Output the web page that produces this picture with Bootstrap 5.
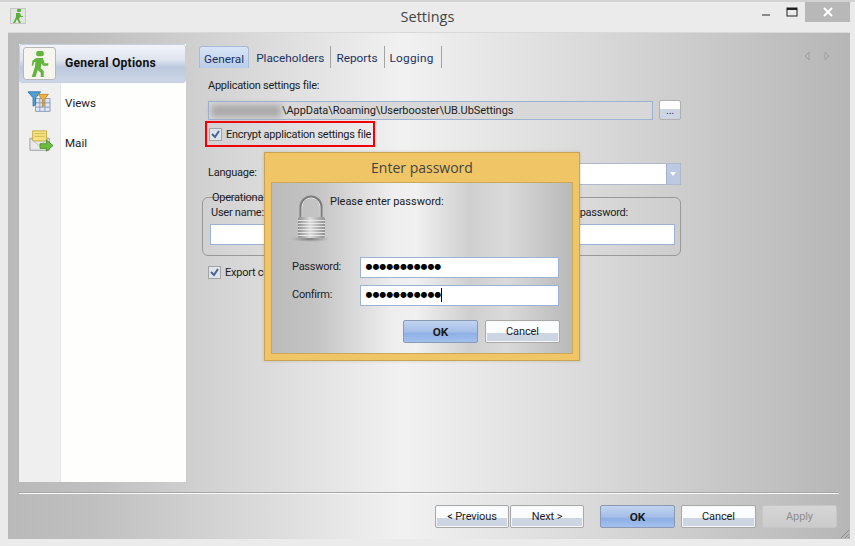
<!DOCTYPE html>
<html lang="en">
<head>
<meta charset="utf-8">
<title>Settings</title>
<link href="https://cdn.jsdelivr.net/npm/bootstrap@5.3.0/dist/css/bootstrap.min.css" rel="stylesheet">
<style>
html,body{margin:0;height:546px;overflow:hidden;background:#ebebeb}
body{font-family:Roboto,"Liberation Sans",sans-serif;font-size:11px;letter-spacing:-.25px;color:#1c1c1c;line-height:14px}
.win{width:855px;height:546px;border-top:2px solid #d2d2d2;position:relative}
.tbar{height:30px;padding-left:10px}
.ticon{width:16px;height:16px;margin-top:6px;background:#e2e6e0;border:1px solid #c6c6c6}
.ttl{font-family:"Open Sans",sans-serif;letter-spacing:0;font-size:14.5px;color:#444;position:absolute;left:0;right:0;top:8px;text-align:center}
.wbtns{position:absolute;right:5px;top:0;height:20px}
.wb{width:26px;height:20px}
.wx{width:45px;background:#b8b8b8;color:#fff}
.panel{margin-left:8px;width:842px;height:507px;border-top:1px solid #d9d9d9;background:linear-gradient(90deg,#b9b9b9 0,#bfbfbf 10%,#f1f1f1 47%,#d6d6d6 72%,#b6b6b6 100%);padding:11px 11px 0;position:relative}
.side{width:167px;height:438px;background:linear-gradient(90deg,#efefef 41px,#e6e6e6 41px,#e6e6e6 42px,#fefefd 42px)}
.sitem{height:40px;padding-left:46px;color:#222;position:relative;font-size:11.6px;letter-spacing:0}
.sitem.on{height:39px;padding-left:45px;padding-bottom:2px;font-weight:700;font-size:12.2px;letter-spacing:.2px;color:#111;border:1px solid #c6cfe0;border-radius:3px;background:linear-gradient(#f2f4f9 0,#dfe4ef 40%,#bcc8de 60%,#cdd6e7 100%)}
.sic{position:absolute}
.on .sic{left:3px;top:2px;width:33px;height:33px;background:#f6f6ee;border:1px solid #b8b8b8;border-radius:3px}
.sv{left:8px;top:8px}
.sm{left:9px;top:6px}
.main{width:638px;padding:2px 0 0 13px}
.tabs{height:22px;color:#1d3263;position:relative;font-size:11.8px;letter-spacing:0;white-space:nowrap}
.tabs .tb{padding:5px 6px 0 5px;border-right:1px solid #a4a4a4;height:22px}
.tabs .tb.on{padding:5px 4px 0 4px;border:1px solid #a9bbd8;border-bottom:0;border-radius:3px 3px 0 0;background:linear-gradient(#d8e5f6,#b9cdea);margin-right:1px}
.tabs .tb.t2{padding-left:6px}
.tabs .tb.t4{letter-spacing:.25px;padding-right:7px}
.arrs{position:absolute;right:-6px;top:5px;gap:14px}
.f{padding-left:9px}
.lb1{margin-top:11px;height:14px}
.path{height:19px;width:445px;background:#d8d8d8;border:1px solid #9db1d3;padding-left:2px;line-height:17px;white-space:nowrap;letter-spacing:-.07px}
.blur{display:inline-block;width:70px;height:12px;background:#a8a8a8;filter:blur(3px);vertical-align:middle;margin-right:1px}
.dots{width:22px;height:20px;margin-left:6px;border:1px solid #b0b0b0;border-radius:2px;background:linear-gradient(#fdfdfd 45%,#cdd4e2 45%);color:#3a2a7a;text-align:center;line-height:20px;font-size:11px}
.pathrow{margin-top:7px}
.enc{margin:1px 0 0 -3px;width:170px;height:26px;border:2px solid #f00000;padding-left:2px;gap:4px;white-space:nowrap}
.cb{width:13px;height:13px;flex:none;border:1px solid #a4a4a4;background:#dfe3ea}
.cbt{padding-top:2px}
.lang{margin-top:16px;height:22px;padding-bottom:3px}
.selbox{position:absolute;left:255px;width:218px;top:0;height:22px;border:1px solid #b0b8ca;background:#fff}
.drop{position:absolute;right:0;top:0;width:14px;height:20px;background:#bcc9e1;border-left:1px solid #9fb0cf}
.drop::after{content:"";position:absolute;left:3px;top:8px;border:3.5px solid transparent;border-top:4px solid #fff;border-bottom:0}
.fs{margin:12px 0 0 -6px;position:relative;width:479px;height:59px;border:1px solid #999;border-radius:6px}
.leg{position:absolute;left:8px;top:-7px;padding:0 1px;white-space:nowrap}
.colz{position:absolute;top:8px;left:8px;width:230px;white-space:nowrap}
.colz.cr{left:242px}
.lr{text-align:right;padding-right:47px}
.inp{height:21px;border:1px solid #9db1d3;background:#fff;margin-top:4px;margin-left:-1px}
.exp{margin-top:8px;gap:4px;height:16px}
.sep{margin-top:10px;width:820px;height:2px;border-top:1px solid #a4a4a4;border-bottom:1px solid #fbfbfb}
.foot{margin-top:11px;width:819px;padding-right:1px;gap:6px}
.wbn{height:23px;width:75px;border:1px solid #a9a9a9;border-radius:2px;background:linear-gradient(#fbfcfe 56%,#cdd4e2 56%);color:#1c1c1c;text-align:center;line-height:22px;font-size:11px;letter-spacing:-.1px;padding:0;box-shadow:inset 0 0 0 1px #f7f7f7}
.navb{width:74px}
.navg{gap:1px;margin-right:10px}
.wbn.pri{font-weight:700;font-size:11.8px;letter-spacing:0;background:linear-gradient(#c2d3ef 0,#a5bfe8 50%,#8fb0e6 60%,#a3c0ee 100%);border-color:#8a99b4;box-shadow:none}
.wbn.off{background:linear-gradient(#d6d6d6,#cbcbcb);color:#8e8e8e;border-color:#c6c6c6;box-shadow:none}
.grip{position:absolute;right:0;bottom:0}
.dlg{position:absolute;left:264px;top:150px;width:316px;height:209px;background:#f0c566;border:1px solid #c9a352;box-shadow:0 0 3px rgba(120,100,60,.25)}
.dttl{font-family:"Open Sans",sans-serif;letter-spacing:0;height:29px;text-align:center;font-size:14px;line-height:29px;color:#444}
.dbody{position:relative;margin:0 6px;height:172px;border:1px solid #c9a85c;background:linear-gradient(90deg,#bbb 0,#c4c4c4 15%,#eee 40%,#f0f0f0 48%,#cfcfcf 66%,#dadada 78%,#b9b9b9 100%);padding:12px 0 0 58px}
.pl{letter-spacing:-.02px}
.lock{position:absolute;left:18px;top:12px}
.dlab{position:absolute;left:20px}
.pw{position:absolute;left:88px;width:199px;height:21px;border:1px solid #9db1d3;background:#fff;font-family:"DejaVu Sans",sans-serif;letter-spacing:0;font-size:7.9px;line-height:18px;padding-left:4.500px;color:#000;white-space:nowrap}
.caret{display:inline-block;width:1px;height:14px;background:#000;vertical-align:middle}
.dbtns{position:absolute;left:131px;top:137px;gap:7px}
</style>
</head>
<body>
<div class="win">
  <div class="tbar d-flex">
    <div class="ticon d-flex align-items-center justify-content-center"><svg width="12" height="14" viewBox="0 0 12 14"><g fill="#5cae3a"><rect x="5" y="0" width="4" height="3" rx="1"/><path d="M4 4h4l1 3h2v1H8L7 10l2 4H7L5 10l-2 4H1l3-6z"/></g></svg></div>
    <div class="ttl">Settings</div>
    <div class="wbtns d-flex">
      <div class="wb d-flex align-items-center justify-content-center"><svg width="10" height="10"><rect x="1" y="7" width="8" height="2" fill="#8a8a8a"/></svg></div>
      <div class="wb d-flex align-items-center justify-content-center"><svg width="12" height="10"><rect x="1" y="1" width="10" height="8" fill="none" stroke="#222"/><rect x="1" y="1" width="10" height="2" fill="#222"/></svg></div>
      <div class="wx d-flex align-items-center justify-content-center"><svg width="10" height="10"><path d="M1 1l8 8M9 1l-8 8" stroke="#fff" stroke-width="2"/></svg></div>
    </div>
  </div>
  <div class="panel">
    <div class="d-flex">
      <div class="side flex-none">
        <div class="sitem on d-flex align-items-center">
          <div class="sic d-flex align-items-center justify-content-center"><svg width="18" height="26" viewBox="0 0 24 30" preserveAspectRatio="none"><g fill="#63b33f"><rect x="7" y="0" width="10" height="6" rx="2"/><path d="M7 8h9l2 6h5v3h-7l-2-3-1 6 4 3v7h-4v-5l-4-3-3 8H1l4-11 1-6H4l-1 4H1l1-6z"/></g></svg></div>
          <span>General Options</span>
        </div>
        <div class="sitem d-flex align-items-center">
          <div class="sic sv"><svg width="24" height="22" viewBox="0 0 28 26"><rect x="10" y="9" width="17" height="15" fill="#dfe6f2" stroke="#7f93b5"/><path d="M10 14h17M10 19h17M15 9v15M21 9v15" stroke="#7f93b5"/><path d="M1 1h15l-6 7v8l-3 2V8z" fill="#4f9fd8" stroke="#2d6fa5"/><path d="M13 4h12l-5 6v7l-2 2v-9z" fill="#efb23c" stroke="#b9812a"/></svg></div>
          <span>Views</span>
        </div>
        <div class="sitem d-flex align-items-center">
          <div class="sic sm"><svg width="26" height="24" viewBox="0 0 28 26"><path d="M2 10h21v13H2z" fill="#eaeaea" stroke="#9a9a9a"/><path d="M5 2h15v11H5z" fill="#f7e27f" stroke="#c4a93f"/><path d="M7 5h11M7 8h11" stroke="#d3b94e"/><path d="M2 10l10 8 11-8" fill="none" stroke="#bdbdbd"/><path d="M13 16h7v-4l7 6-7 6v-3h-7z" fill="#6cbd3f" stroke="#4b942a"/></svg></div>
          <span>Mail</span>
        </div>
      </div>
      <div class="main">
        <div class="tabs d-flex">
          <div class="tb on">General</div><div class="tb t2">Placeholders</div><div class="tb">Reports</div><div class="tb t4">Logging</div>
          <div class="arrs d-flex"><svg width="6" height="10"><path d="M5 1L1 5l4 4z" fill="none" stroke="#a0a0a0"/></svg><svg width="6" height="10"><path d="M1 1l4 4-4 4z" fill="none" stroke="#a0a0a0"/></svg></div>
        </div>
        <div class="f">
          <div class="lb1">Application settings file:</div>
          <div class="d-flex align-items-center pathrow">
            <div class="path"><span class="blur"></span>\AppData\Roaming\Userbooster\UB.UbSettings</div>
            <div class="dots">...</div>
          </div>
          <div class="enc d-flex align-items-center"><span class="cb d-flex align-items-center justify-content-center"><svg width="9" height="9"><path d="M1 4l3 3 4-6" fill="none" stroke="#4a6296" stroke-width="2"/></svg></span><span class="cbt">Encrypt application settings file</span></div>
          <div class="lang position-relative d-flex align-items-center">Language:<div class="selbox"><div class="drop"></div></div></div>
          <div class="fs">
            <div class="leg">Operational user</div>
            <div class="colz">User name:<div class="inp"></div></div>
            <div class="colz cr"><div class="lr">User password:</div><div class="inp"></div></div>
          </div>
          <div class="exp d-flex align-items-center"><span class="cb d-flex align-items-center justify-content-center"><svg width="9" height="9"><path d="M1 4l3 3 4-6" fill="none" stroke="#4a6296" stroke-width="2"/></svg></span><span class="cbt">Export config</span></div>
        </div>
      </div>
    </div>
    <div class="sep"></div>
    <div class="foot d-flex justify-content-end">
      <div class="d-flex navg"><button class="wbn navb">&lt; Previous</button><button class="wbn navb">Next &gt;</button></div>
      <button class="wbn pri">OK</button><button class="wbn">Cancel</button><button class="wbn off">Apply</button>
    </div>
    <svg class="grip" width="12" height="12"><path d="M11 3L3 11M11 7l-4 4M11 10l-1 1" stroke="#8f8f8f"/></svg>
  </div>
  <div class="dlg">
    <div class="dttl">Enter password</div>
    <div class="dbody">
      <svg class="lock" width="40" height="48" viewBox="0 0 40 48">
        <defs>
          <linearGradient id="lb" x1="0" x2="1" y1="0" y2="0"><stop offset="0" stop-color="#8d8d8d"/><stop offset=".45" stop-color="#dcdcdc"/><stop offset="1" stop-color="#8f8f8f"/></linearGradient>
          <radialGradient id="ls"><stop offset="0" stop-color="#555" stop-opacity=".7"/><stop offset="1" stop-color="#777" stop-opacity="0"/></radialGradient>
        </defs>
        <ellipse cx="20" cy="44" rx="20" ry="3" fill="url(#ls)"/>
        <path d="M11 23V12a10 10 0 0 1 20 0v11" fill="none" stroke="#7d7d7d" stroke-width="3"/>
        <path d="M12 23V12a9 9 0 0 1 18 0v11" fill="none" stroke="#eee" stroke-width="1"/>
        <rect x="8" y="22" width="27" height="21" rx="2" fill="url(#lb)"/>
        <path d="M8 25.500h27M8 28.500h27M8 31.500h27M8 34.500h27M8 37.500h27M8 40.500h27" stroke="#f2f2f2" opacity=".8"/>
      </svg>
      <div class="pl">Please enter password:</div>
      <div class="dlab" style="top:77px">Password:</div>
      <div class="pw" style="top:74px">●●●●●●●●●●●</div>
      <div class="dlab" style="top:105px">Confirm:</div>
      <div class="pw" style="top:102px">●●●●●●●●●●●<span class="caret"></span></div>
      <div class="dbtns d-flex"><button class="wbn pri">OK</button><button class="wbn">Cancel</button></div>
    </div>
  </div>
</div>
</body>
</html>
